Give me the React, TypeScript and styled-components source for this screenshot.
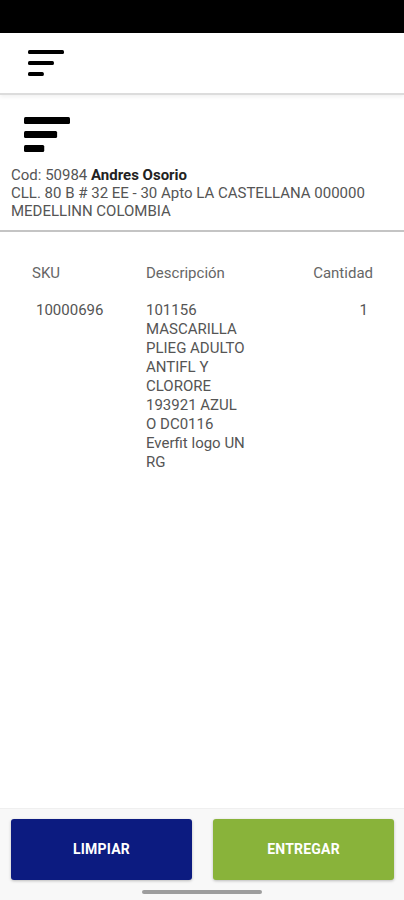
import React from "react";
import styled, { createGlobalStyle } from "styled-components";

const Global = createGlobalStyle`
  html, body { margin: 0; padding: 0; background: #fff; }
  body { font-family: Roboto, "Noto Sans", Arial, sans-serif; }
  #root { min-height: 900px; }
`;

const Screen = styled.div`
  width: 404px;
  height: 900px;
  display: flex;
  flex-direction: column;
  background: #fff;
  overflow: hidden;
`;

const StatusBar = styled.div`
  height: 33px;
  background: #000;
  flex-shrink: 0;
`;

const Toolbar = styled.div`
  height: 60px;
  padding-left: 28px;
  display: flex;
  align-items: center;
  border-bottom: 2px solid #dcdcdc;
  box-shadow: 0 2px 4px rgba(0, 0, 0, 0.06);
  flex-shrink: 0;
`;

const Header = styled.div`
  padding: 22px 0 10px 11px;
  border-bottom: 2px solid #c4c4c4;
  flex-shrink: 0;
`;

const IconWrap = styled.div`
  padding-left: 13px;
  height: 36px;
`;

const Info = styled.div`
  margin-top: 13px;
  font-size: 15px;
  line-height: 18px;
  color: #555;
`;

const Name = styled.span`
  color: #222;
  font-weight: 700;
`;

const Table = styled.div`
  display: grid;
  grid-template-columns: 114px 116px 1fr;
  padding: 32px 31px 0 32px;
  row-gap: 18px;
  font-size: 15px;
  color: #666;
`;

const HeadCell = styled.div<{ $right?: boolean }>`
  line-height: 19px;
  text-align: ${(p) => (p.$right ? "right" : "left")};
`;

const Cell = styled.div<{ $right?: boolean; $indent?: number }>`
  line-height: 19px;
  color: #555;
  text-align: ${(p) => (p.$right ? "right" : "left")};
  padding-left: ${(p) => p.$indent ?? 0}px;
  padding-right: ${(p) => (p.$right ? 5 : 0)}px;
`;

const Spacer = styled.div`
  flex: 1;
`;

const Footer = styled.div`
  background: #f8f8f8;
  border-top: 1px solid #efefef;
  padding: 10px 10px 0 11px;
  height: 92px;
  box-sizing: border-box;
  display: flex;
  flex-direction: column;
  align-items: center;
  flex-shrink: 0;
`;

const Buttons = styled.div`
  display: grid;
  grid-template-columns: 181px 181px;
  column-gap: 21px;
`;

const Button = styled.button<{ $bg: string }>`
  height: 61px;
  padding-bottom: 3px;
  border: none;
  border-radius: 3px;
  background: ${(p) => p.$bg};
  color: #fff;
  font-family: Roboto, Arial, sans-serif;
  font-weight: 700;
  font-size: 14px;
  letter-spacing: 0.2px;
  box-shadow: 0 1px 3px rgba(0, 0, 0, 0.25);
`;

const HomeBar = styled.div`
  width: 120px;
  height: 4px;
  border-radius: 2px;
  background: #9d9d9d;
  margin-top: 10px;
  margin-left: -2px;
`;

const SortIcon = ({ w, h, bar }: { w: number; h: number; bar: number }) => (
  <svg width={w} height={h} viewBox={`0 0 ${w} ${h}`}>
    <rect x="0" y="0" width={w} height={bar} rx={1.5} fill="#000" />
    <rect x="0" y={(h - bar) / 2} width={w * 0.72} height={bar} rx={1.5} fill="#000" />
    <rect x="0" y={h - bar} width={w * 0.44} height={bar} rx={1.5} fill="#000" />
  </svg>
);

const desc = [
  "101156",
  "MASCARILLA",
  "PLIEG ADULTO",
  "ANTIFL Y",
  "CLORORE",
  "193921 AZUL",
  "O DC0116",
  "Everfit logo UN",
  "RG",
];

export default function App() {
  return (
    <>
      <Global />
      <Screen>
        <StatusBar />
        <Toolbar>
          <SortIcon w={36} h={26} bar={4} />
        </Toolbar>
        <Header>
          <IconWrap>
            <SortIcon w={46} h={35} bar={7} />
          </IconWrap>
          <Info>
            Cod: 50984 <Name>Andres Osorio</Name>
            <br />
            CLL. 80 B # 32 EE - 30 Apto LA CASTELLANA 000000
            <br />
            MEDELLINN COLOMBIA
          </Info>
        </Header>
        <Table>
          <HeadCell>SKU</HeadCell>
          <HeadCell>Descripción</HeadCell>
          <HeadCell $right>Cantidad</HeadCell>
          <Cell $indent={4}>10000696</Cell>
          <Cell>
            {desc.map((d) => (
              <div key={d}>{d}</div>
            ))}
          </Cell>
          <Cell $right>1</Cell>
        </Table>
        <Spacer />
        <Footer>
          <Buttons>
            <Button $bg="#0c1b80">LIMPIAR</Button>
            <Button $bg="#89b33a">ENTREGAR</Button>
          </Buttons>
          <HomeBar />
        </Footer>
      </Screen>
    </>
  );
}
